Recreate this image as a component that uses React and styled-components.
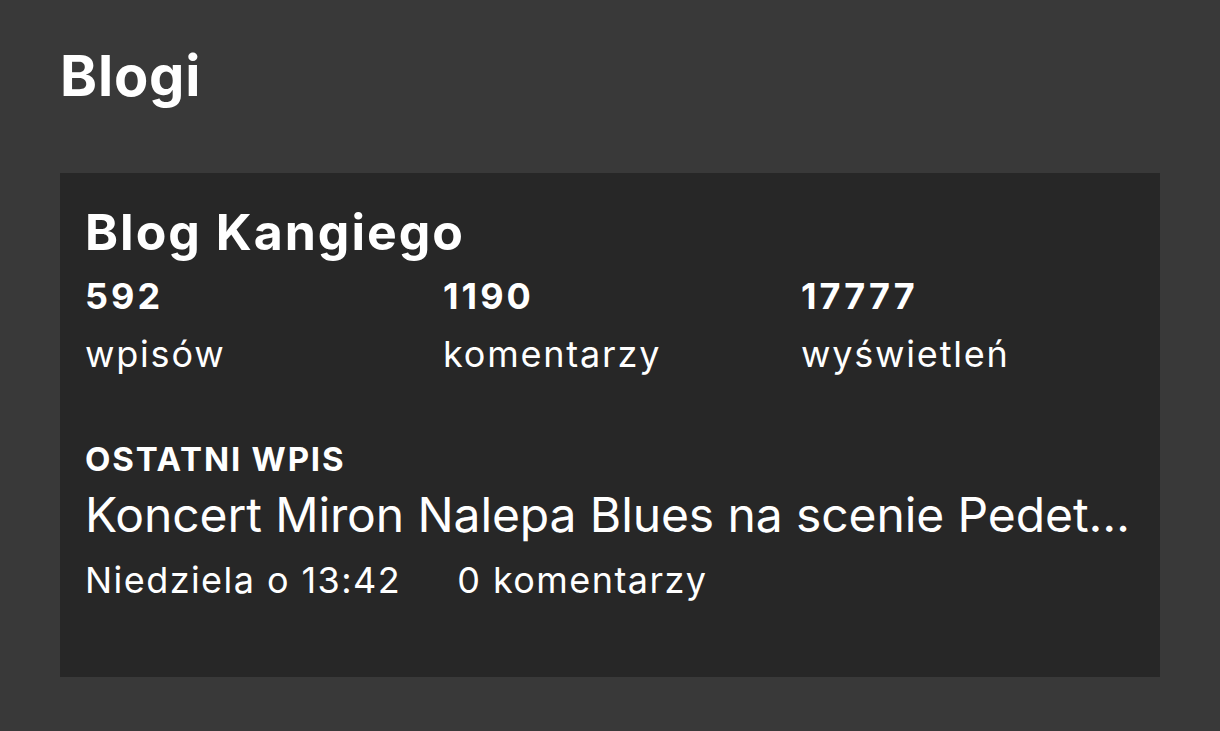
import React from "react";
import styled, { createGlobalStyle } from "styled-components";

const Global = createGlobalStyle`
  html, body { margin: 0; padding: 0; background: #393939; }
  body { font-family: Inter, "Noto Sans", sans-serif; color: #ffffff; }
  * { box-sizing: border-box; }
`;

const Page = styled.main`
  padding: 43px 60px 40px;
`;

const PageTitle = styled.h1`
  margin: 0 0 63px;
  font-size: 56px;
  line-height: 67px;
  font-weight: 700;
  letter-spacing: 0.015em;
`;

const Card = styled.section`
  background: #272727;
  padding: 25px 25px 65px;
  display: flex;
  flex-direction: column;
`;

const BlogName = styled.h2`
  margin: 0;
  font-size: 50px;
  line-height: 69px;
  font-weight: 700;
  letter-spacing: 0.04em;
`;

const Stats = styled.div`
  display: grid;
  grid-template-columns: repeat(3, 1fr);
  column-gap: 24px;
  margin-top: 1px;
`;

const Stat = styled.div`
  display: flex;
  flex-direction: column;
  font-size: 36px;
  line-height: 57.6px;
`;

const StatValue = styled.span`
  font-weight: 700;
  letter-spacing: 0.085em;
`;

const StatLabel = styled.span`
  font-weight: 400;
  letter-spacing: 0.05em;
`;

const SectionLabel = styled.div`
  margin-top: 55px;
  font-size: 33px;
  line-height: 43px;
  font-weight: 700;
  letter-spacing: 0.055em;
  text-transform: uppercase;
`;

const PostTitle = styled.div`
  font-size: 48px;
  line-height: 67px;
  font-weight: 400;
  letter-spacing: -0.002em;
  white-space: nowrap;
  overflow: hidden;
  text-overflow: ellipsis;
`;

const Meta = styled.div`
  display: flex;
  gap: 56px;
  font-size: 36px;
  line-height: 64px;
  font-weight: 400;
  letter-spacing: 0.04em;
`;

const stats = [
  { value: "592", label: "wpisów" },
  { value: "1190", label: "komentarzy" },
  { value: "17777", label: "wyświetleń" },
];

export default function App() {
  return (
    <>
      <Global />
      <Page>
        <PageTitle>Blogi</PageTitle>
        <Card>
          <BlogName>Blog Kangiego</BlogName>
          <Stats>
            {stats.map((s) => (
              <Stat key={s.label}>
                <StatValue>{s.value}</StatValue>
                <StatLabel>{s.label}</StatLabel>
              </Stat>
            ))}
          </Stats>
          <SectionLabel>Ostatni wpis</SectionLabel>
          <PostTitle>Koncert Miron Nalepa Blues na scenie Pedetu w Lublinie</PostTitle>
          <Meta>
            <span>Niedziela o 13:42</span>
            <span>0 komentarzy</span>
          </Meta>
        </Card>
      </Page>
    </>
  );
}
